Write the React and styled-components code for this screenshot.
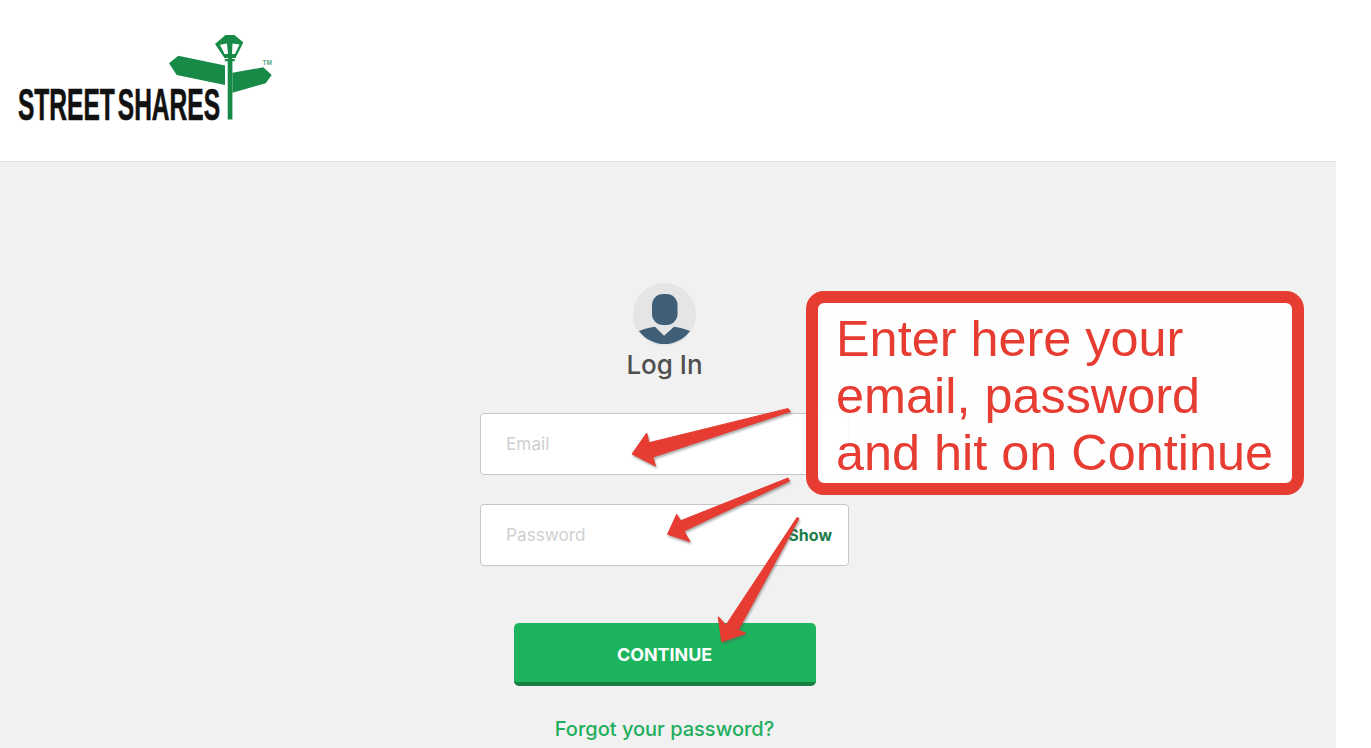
import React from 'react';
import styled, { createGlobalStyle } from 'styled-components';

const Global = createGlobalStyle`
  html, body { margin: 0; padding: 0; background: #ffffff; }
  body { font-family: Inter, Lato, "Liberation Sans", sans-serif; overflow: hidden; }
  * { box-sizing: border-box; }
`;
const Page = styled.div`
  position: relative;
  width: 1371px;
  height: 748px;
  overflow: hidden;
`;
const Shell = styled.div`
  width: 1336px;
  height: 748px;
  display: flex;
  flex-direction: column;
`;
const Header = styled.header`
  height: 162px;
  flex: none;
  padding: 35px 0 0 18px;
  background: #ffffff;
  border-bottom: 1px solid #e2e2e2;
`;
const LogoSvg = styled.svg`
  display: block;
  width: 400px;
  height: 100px;
`;
const Main = styled.main`
  flex: 1;
  background: #f1f1f1;
  display: flex;
  flex-direction: column;
  align-items: center;
  padding: 121px 7px 0 0;
`;
const Avatar = styled.svg`
  display: block;
  width: 63px;
  height: 63px;
`;
const Title = styled.h1`
  margin: 3px 0 0;
  height: 32px;
  line-height: 32px;
  font-size: 26px;
  font-weight: 500;
  color: #4f4f4f;
`;
const Form = styled.form`
  margin-top: 32px;
  width: 369px;
  display: flex;
  flex-direction: column;
  align-items: center;
  gap: 29px;
`;
const Field = styled.div`
  width: 100%;
  height: 62px;
  display: flex;
  align-items: center;
  padding: 0 16px 0 25px;
  background: #ffffff;
  border: 1px solid #c6c6c6;
  border-radius: 4px;
`;
const Input = styled.input`
  flex: 1;
  min-width: 0;
  border: 0;
  outline: 0;
  padding: 0 0 2px;
  background: transparent;
  font: 400 17.2px Inter, sans-serif;
  color: #444;
  &::placeholder { color: #cfcfcf; opacity: 1; }
`;
const Show = styled.span`
  font-size: 16px;
  font-weight: 700;
  color: #1a7d47;
`;
const Submit = styled.button`
  margin-top: 28px;
  width: 302px;
  height: 63px;
  border: 0;
  border-bottom: 4px solid #178040;
  border-radius: 5px;
  background: #1cb55e;
  color: #ffffff;
  font: 700 17.9px Inter, sans-serif;
  padding: 4px 0 0;
`;
const Forgot = styled.a`
  margin-top: 29px;
  font-size: 20px;
  line-height: 28px;
  font-weight: 500;
  color: #1fae5c;
`;
const Callout = styled.div`
  position: absolute;
  left: 806px;
  top: 291px;
  width: 498px;
  height: 204px;
  padding: 7px 0 0 18px;
  border: 12px solid #e63c31;
  border-radius: 18px;
  background: rgba(255, 255, 255, 0.9);
  color: #e63c31;
  font: 400 50.4px/57px "Liberation Sans", Arial, sans-serif;
  background-clip: padding-box;
`;
const CalloutLine = styled.div`
  white-space: nowrap;
`;
const Arrows = styled.svg`
  position: absolute;
  left: 0;
  top: 0;
  width: 1371px;
  height: 748px;
  pointer-events: none;
  filter: drop-shadow(1.5px 2px 1px rgba(90, 90, 90, 0.5));
`;

const Logo = () => (
  <LogoSvg viewBox="18 35 400 100" aria-label="StreetShares">
    <text
      x="18"
      y="119.5"
      fontFamily='"Liberation Sans", Arial, sans-serif'
      fontWeight="700"
      fontSize="45"
      fill="#111111"
      stroke="#111111"
      strokeWidth="0.7"
      wordSpacing="-7"
      textLength="202"
      lengthAdjust="spacingAndGlyphs"
    >
      STREET SHARES
    </text>
    <g fill="#178a48">
      <rect x="227.7" y="60" width="4.7" height="59.5" />
      <rect x="224.8" y="59" width="10" height="2.2" />
      <polygon points="169,63.3 178.3,55.7 225,65.5 225,85 176.7,75" />
      <polygon points="232.4,72.7 263.3,67.3 271.7,75 265.7,83.3 232.4,92.7" />
      <path
        fillRule="evenodd"
        d="M215 44 L225.5 35 H234.5 L243.3 42.5 L235.5 58 H224.5 Z M220 44.8 L224.5 54 H228 L227 43.6 Z M232.5 43.6 L232 54 H235 L239.5 44.5 Z"
      />
      <rect x="228" y="56" width="4" height="4" />
    </g>
    <text x="262.5" y="65" fontFamily='"Liberation Sans", sans-serif' fontSize="6.5" fontWeight="700" fill="#5fa883">
      TM
    </text>
  </LogoSvg>
);

export default function App() {
  return (
    <Page>
      <Global />
      <Shell>
        <Header>
          <Logo />
        </Header>
        <Main>
          <Avatar viewBox="0 0 63 63">
            <circle cx="31.5" cy="31.5" r="31.5" fill="#e5e5e5" />
            <rect x="19" y="11" width="25.5" height="31" rx="11" fill="#3f5f78" />
            <path d="M6 48 C10 46 16 44.5 22 43.7 L31 52.7 L41 43.7 C47 44.5 53 46 57 48 A31.5 31.5 0 0 1 6 48 Z" fill="#3f5f78" />
          </Avatar>
          <Title>Log In</Title>
          <Form onSubmit={(e) => e.preventDefault()}>
            <Field>
              <Input placeholder="Email" />
            </Field>
            <Field>
              <Input placeholder="Password" />
              <Show>Show</Show>
            </Field>
            <Submit type="button">CONTINUE</Submit>
          </Form>
          <Forgot>Forgot your password?</Forgot>
        </Main>
      </Shell>
      <Callout>
        <CalloutLine>Enter here your</CalloutLine>
        <CalloutLine>email, password</CalloutLine>
        <CalloutLine>and hit on Continue</CalloutLine>
      </Callout>
      <Arrows viewBox="0 0 1371 748">
        <g fill="#e63c31" stroke="#e63c31" strokeWidth="1" strokeLinejoin="round">
          <polygon points="632,454 646.7,433 649,442.7 788,408.5 790.5,411.5 653,457 655.5,466" />
          <polygon points="667.5,534.3 676.7,514.3 680.7,520.7 788,478 789.5,481 684,531 690,541.7" />
          <polygon points="721.7,641.7 718.3,616.7 726,625 797,517.5 799,518.5 738.3,630 746,633.3" />
        </g>
      </Arrows>
    </Page>
  );
}
